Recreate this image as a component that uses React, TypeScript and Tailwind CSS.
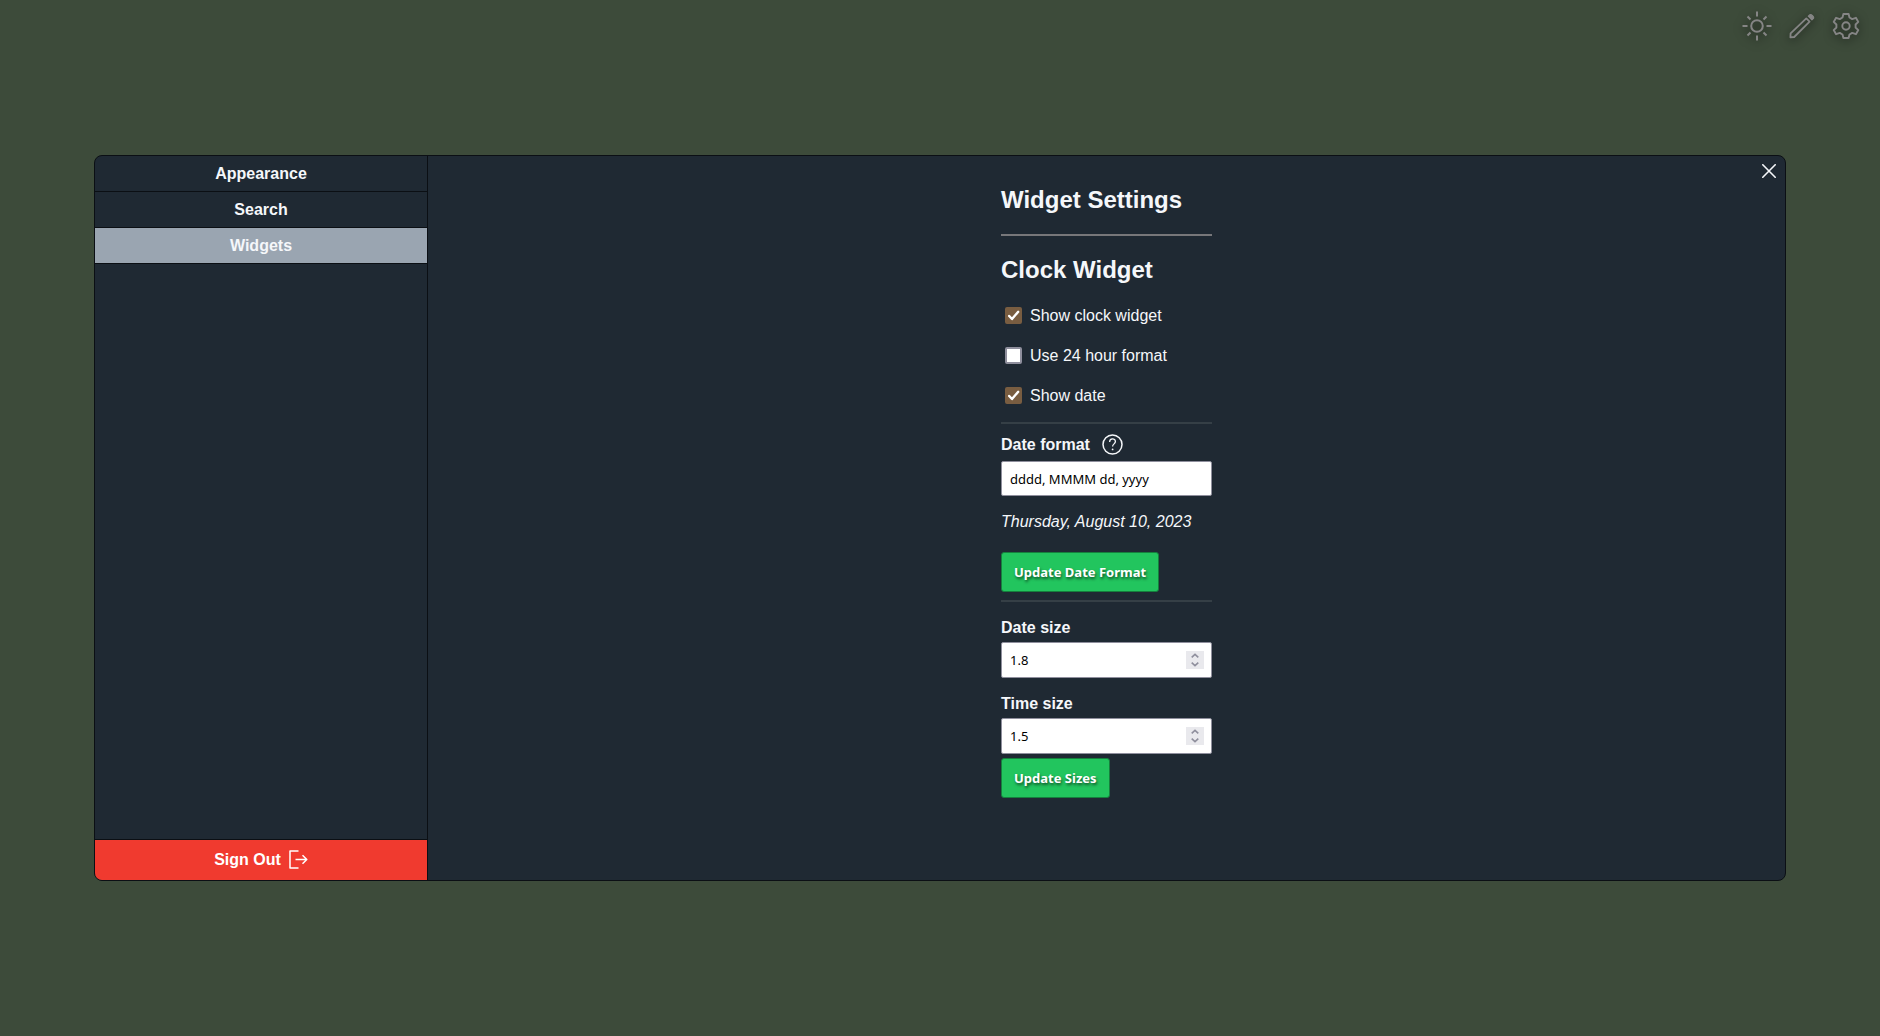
import { useState } from "react";
import type { ReactNode } from "react";

const tabs = ["Appearance", "Search", "Widgets"];

function SunIcon() {
  return (
    <svg width="30" height="30" viewBox="0 0 30 30" fill="none" stroke="currentColor" strokeWidth="2">
      <circle cx="15" cy="15" r="5.8" />
      <path d="M15 .5v5M15 24.5v5M.5 15h5M24.5 15h5M5.5 5.5l3 3M24.5 5.5l-3 3M5.5 24.5l3-3M24.5 24.5l-3-3" />
    </svg>
  );
}

function PencilIcon() {
  return (
    <svg width="26" height="26" viewBox="0 0 26 26" fill="none" stroke="currentColor" strokeWidth="1.8" strokeLinejoin="round">
      <path d="M1.4 24.4 1.6 20.4 17.3 5.4l3.3 3.3L5.2 24z" />
      <path d="m19.3 3.2 1.6-1.5c1.2-.9 4.6 2.3 3.5 3.7l-1.5 1.5z" fill="currentColor" strokeWidth="1.2" />
    </svg>
  );
}

function GearIcon() {
  return (
    <svg width="28" height="28" viewBox="0 0 28 28" fill="none" stroke="currentColor" strokeWidth="1.9" strokeLinejoin="round">
      <circle cx="14" cy="14" r="3.7" />
      <path d="M11.4 2h5.2l.9 3.5 2.7 1.6 3.7-1.3 2.4 4.1-2.7 2.6v3l2.7 2.6-2.4 4.1-3.7-1.3-2.7 1.6-.9 3.5h-5.2l-.9-3.5-2.7-1.6-3.7 1.3-2.4-4.1 2.7-2.6v-3L1.700 9.900l2.400-4.100 3.700 1.300 2.700-1.600z" />
    </svg>
  );
}

function CloseIcon() {
  return (
    <svg width="14" height="14" viewBox="0 0 14 14" fill="none" stroke="currentColor" strokeWidth="1.6" strokeLinecap="round">
      <path d="m.8.8 12.4 12.4M13.2.8.8 13.2" />
    </svg>
  );
}

function SignOutIcon() {
  return (
    <svg width="19" height="19" viewBox="0 0 19 19" fill="none" stroke="currentColor" strokeWidth="1.5" strokeLinejoin="round">
      <path d="M9.5 1H1v17h8.5M6.5 9.500h11M13.500 5.200l4.300 4.300-4.300 4.300" />
    </svg>
  );
}

function HelpIcon() {
  return (
    <svg width="21" height="21" viewBox="0 0 21 21" fill="none" stroke="currentColor" strokeWidth="1.5">
      <circle cx="10.5" cy="10.5" r="9.5" />
      <path d="M7.6 8.1c0-4.2 5.8-4 5.8-.5 0 2.3-2.8 2.3-2.8 4.9" strokeWidth="1.3" />
      <circle cx="10.6" cy="15.4" r=".9" fill="currentColor" stroke="none" />
    </svg>
  );
}

function Check({ label, initial }: { label: string; initial: boolean }) {
  const [on, setOn] = useState(initial);
  return (
    <label className="flex h-10 items-center gap-2 pl-1">
      <span className="relative mb-px flex size-[17px]">
        <input
          type="checkbox"
          checked={on}
          onChange={() => setOn(!on)}
          className="size-full appearance-none rounded-xs border-2 border-[#8f8f9d] bg-white checked:border-[#795d41] checked:bg-[#795d41]"
        />
        {on && (
          <svg className="pointer-events-none absolute inset-0" width="17" height="17" viewBox="0 0 17 17" fill="none" stroke="white" strokeWidth="2.4" strokeLinecap="round" strokeLinejoin="round">
            <path d="m4.200 9 2.800 3 6.200-7.200" />
          </svg>
        )}
      </span>
      {label}
    </label>
  );
}

function NumberField({ id, label, initial }: { id: string; label: string; initial: number }) {
  const [value, setValue] = useState(initial);
  const step = (d: number) => setValue(Math.round((value + d) * 10) / 10);
  return (
    <div className="flex flex-col gap-0.5">
      <label htmlFor={id} className="font-bold">{label}</label>
      <div className="relative">
        <input
          id={id}
          type="number"
          step="0.1"
          value={value}
          onChange={(e) => setValue(Number(e.target.value))}
          className="block h-9 w-full appearance-none rounded-xs border border-[#8f8f9d] bg-white px-2 font-['Noto_Sans',sans-serif] text-[13px] text-black [-moz-appearance:textfield] [&::-webkit-inner-spin-button]:appearance-none"
        />
        <span className="absolute top-[9px] right-2 flex size-[18px] flex-col bg-[#e9e9ed] text-[#8f8f9d]">
          <button type="button" aria-label={`Increase ${label}`} onClick={() => step(0.1)} className="flex h-[9px] items-center justify-center">
            <svg width="8" height="5" viewBox="0 0 8 5" fill="none" stroke="currentColor" strokeWidth="1.6"><path d="m.7 4.3 3.3-3 3.3 3" /></svg>
          </button>
          <button type="button" aria-label={`Decrease ${label}`} onClick={() => step(-0.1)} className="flex h-[9px] items-center justify-center">
            <svg width="8" height="5" viewBox="0 0 8 5" fill="none" stroke="currentColor" strokeWidth="1.6"><path d="m.7.7 3.3 3 3.3-3" /></svg>
          </button>
        </span>
      </div>
    </div>
  );
}

function GreenButton({ children }: { children: ReactNode }) {
  return (
    <button
      type="button"
      className="h-10 self-start rounded-[3px] border border-[#15803d] bg-[#22c55e] px-3 font-['Noto_Sans',sans-serif] text-[13px] font-bold text-white [text-shadow:1px_2px_3px_rgba(0,0,0,0.6)]"
    >
      {children}
    </button>
  );
}

export default function App() {
  const [active, setActive] = useState("Widgets");
  const [format, setFormat] = useState("dddd, MMMM dd, yyyy");

  return (
    <div className="relative flex min-h-screen items-center justify-center bg-[#3d4b3a] font-['Liberation_Sans',Arial,sans-serif] text-base text-[#f5f7fa]">
      <nav className="absolute top-[11px] right-5 flex items-center gap-[17px] text-[#858585] [&_svg]:drop-shadow-[0_2px_5px_rgba(0,0,0,0.6)]">
        <button type="button" aria-label="Toggle theme"><SunIcon /></button>
        <button type="button" aria-label="Edit"><PencilIcon /></button>
        <button type="button" aria-label="Settings"><GearIcon /></button>
      </nav>

      <section className="relative flex min-h-[70vh] w-[90%] overflow-hidden rounded-lg border border-[#0b0f14] bg-[#1f2933]">
        <aside className="flex w-[333px] shrink-0 flex-col border-r border-[#0b0f14]">
          {tabs.map((tab) => (
            <button
              key={tab}
              type="button"
              onClick={() => setActive(tab)}
              className={
                tab === active
                  ? "h-9 border-b border-[#0b0f14] bg-[#9aa5b1] font-bold"
                  : "h-9 border-b border-[#0b0f14] font-bold"
              }
            >
              {tab}
            </button>
          ))}
          <button type="button" className="mt-auto flex h-[41px] items-center justify-center gap-2 border-t border-[#0b0f14] bg-[#f03a2f] font-bold text-white">
            Sign Out
            <SignOutIcon />
          </button>
        </aside>

        <main className="flex flex-1 justify-center pt-7 pb-8">
          <div className="flex w-[211px] flex-col">
            <h1 className="text-2xl font-bold">Widget Settings</h1>
            <hr className="mt-[18px] border-t-2 border-[#77777a]" />
            <h2 className="mt-[18px] mb-2.5 text-2xl font-bold">Clock Widget</h2>
            <Check label="Show clock widget" initial={true} />
            <Check label="Use 24 hour format" initial={false} />
            <Check label="Show date" initial={true} />
            <hr className="mt-1.5 border-t-2 border-[#353f46]" />
            <div className="mt-[9px] flex items-center gap-3">
              <label htmlFor="date-format" className="font-bold">Date format</label>
              <button type="button" aria-label="Date format help" className="mb-0.5"><HelpIcon /></button>
            </div>
            <input
              id="date-format"
              type="text"
              value={format}
              onChange={(e) => setFormat(e.target.value)}
              className="mt-1 h-[35px] rounded-xs border border-[#8f8f9d] bg-white px-2 font-['Noto_Sans',sans-serif] text-[13px] text-black"
            />
            <p className="mt-3.5 mb-[18px] italic">Thursday, August 10, 2023</p>
            <GreenButton>Update Date Format</GreenButton>
            <hr className="mt-2 mb-3.5 border-t-2 border-[#353f46]" />
            <div className="mb-1 flex flex-col gap-3.5">
              <NumberField id="date-size" label="Date size" initial={1.8} />
              <NumberField id="time-size" label="Time size" initial={1.5} />
            </div>
            <GreenButton>Update Sizes</GreenButton>
          </div>
        </main>

        <button type="button" aria-label="Close" className="absolute top-2 right-[9px]"><CloseIcon /></button>
      </section>
    </div>
  );
}
